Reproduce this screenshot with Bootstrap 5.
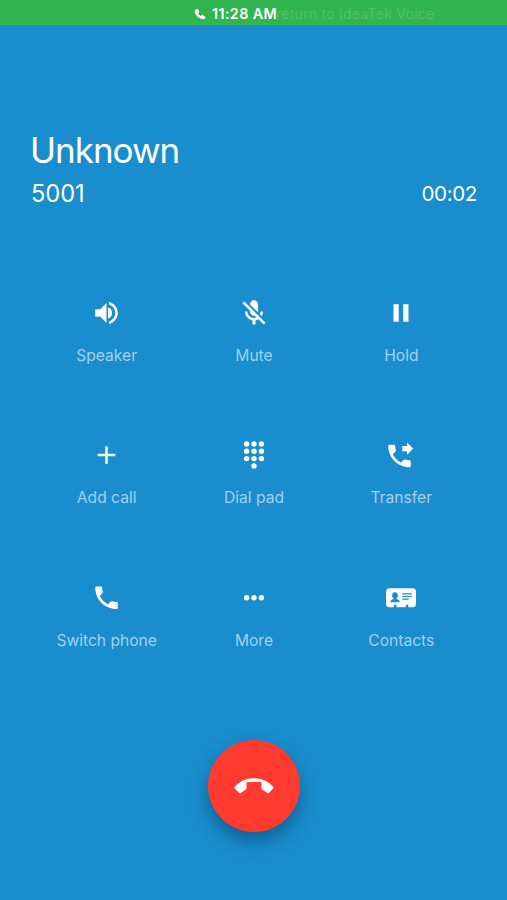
<!DOCTYPE html>
<html lang="en">
<head>
<meta charset="utf-8">
<meta name="viewport" content="width=device-width, initial-scale=1">
<title>Call</title>
<link href="https://cdn.jsdelivr.net/npm/bootstrap@5.3.0/dist/css/bootstrap.min.css" rel="stylesheet">
<style>
body{background:#198dcd;font-family:Inter,"Liberation Sans",sans-serif;height:900px;overflow:hidden}
svg{fill:currentColor;display:block}
.status-bar{height:25px;background:#31b550;line-height:26px;padding:2px 0 0 193px;white-space:nowrap}
.status-time{font-size:14.300px;margin-left:5px;letter-spacing:.4px;font-weight:600;width:66px}
.status-return{color:#50c067;font-size:14px;letter-spacing:.25px;margin-left:-2px}
.caller{padding:103px 30px 0 31px}
.caller-name{font-size:35px;line-height:44px;font-weight:400;letter-spacing:-1px;margin-left:-1px}
.caller-line{height:32px;margin-top:6px;font-weight:400}
.caller-ext{font-size:23.700px;letter-spacing:-.1px}
.caller-time{font-size:20.600px;letter-spacing:-.4px}
.keys{margin:73px 32px 0 33px}
.key{height:142.300px;padding:15px 0 0;color:#fff;background:none;border:0}
.key-label{color:#a3d1eb;font-size:15.600px;line-height:20px;margin-top:18px;letter-spacing:0}
.hang{width:92px;height:92px;background:#ff3b30;margin-top:30px;box-shadow:0 9px 17px rgba(0,35,70,.42);border:0;color:#fff;padding:0}
</style>
<script src="https://cdn.jsdelivr.net/npm/bootstrap@5.3.0/dist/js/bootstrap.bundle.min.js"></script>
</head>
<body class="text-white">
<header class="status-bar d-flex align-items-center">
  <svg width="14" height="14" viewBox="0 0 24 24"><path d="M6.500 3.500C7.500 3 8.300 3.500 9 4.600l1.500 2.700c.6 1.100.3 1.900-.6 2.700l-1.100 1c1 2 2.500 3.500 4.500 4.600l1.200-1c.8-.8 1.700-.9 2.700-.3l3 1.900c1.200.8 1.400 1.900.5 2.900-1.500 1.800-3.700 2.500-6.700 1.200C9 18.200 4.500 13.500 3 8.800 2.300 6.300 4.300 4.500 6.500 3.500z"/></svg>
  <span class="status-time">11:28 AM</span><span class="status-return">return to IdeaTek Voice</span>
</header>
<section class="caller">
  <div class="caller-name">Unknown</div>
  <div class="caller-line d-flex justify-content-between align-items-center">
    <span class="caller-ext">5001</span><span class="caller-time">00:02</span>
  </div>
</section>
<main class="keys row g-0">
  <button class="key col-4 d-flex flex-column align-items-center"><svg width="30" height="30" viewBox="0.4 0 24 24"><path d="M3 9v6h4l5 5V4L7 9H3zm13.500 3A4.500 4.500 0 0 0 13.200 7.600v8.800c2.280-.73 3.300-2.250 3.300-4.400zM14 3.230v2.060c2.890.86 5 3.540 5 6.710s-2.110 5.850-5 6.710v2.060c4.010-.91 7-4.490 7-8.770s-2.990-7.860-7-8.770z"/></svg><span class="key-label">Speaker</span></button>
  <button class="key col-4 d-flex flex-column align-items-center"><svg width="30" height="30" viewBox="0 0 24 24"><path d="M19 11h-1.700c0 .74-.16 1.430-.43 2.050l1.230 1.230c.56-.98.900-2.090.900-3.280zm-4.020.170c0-.06.020-.11.020-.17V5c0-1.660-1.340-3-3-3S9 3.340 9 5v.18l5.980 5.990zM4.270 3L3 4.270l6.010 6.010V11c0 1.660 1.330 3 2.990 3 .22 0 .44-.03.65-.08l1.660 1.660c-.71.33-1.500.52-2.310.52-2.760 0-5.300-2.100-5.300-5.100H5c0 3.410 2.720 6.230 6 6.720V21h2v-3.280c.91-.13 1.770-.45 2.540-.9L19.730 21 21 19.730 4.270 3z" stroke="currentColor" stroke-width=".35"/></svg><span class="key-label">Mute</span></button>
  <button class="key col-4 d-flex flex-column align-items-center"><svg width="30" height="30" viewBox="0 0 24 24"><path d="M6 5h4.200v14H6zM13.800 5H18v14h-4.200z"/></svg><span class="key-label">Hold</span></button>
  <button class="key col-4 d-flex flex-column align-items-center"><svg width="30" height="30" viewBox="0.4 0 24 24"><path d="M19 13h-6v6h-2v-6H5v-2h6V5h2v6h6v2z"/></svg><span class="key-label">Add call</span></button>
  <button class="key col-4 d-flex flex-column align-items-center"><svg width="30" height="30" viewBox="0 0 30 30"><circle cx="7.600" cy="4" r="2.700"/><circle cx="15" cy="4" r="2.700"/><circle cx="22.400" cy="4" r="2.700"/><circle cx="7.600" cy="11.300" r="2.700"/><circle cx="15" cy="11.300" r="2.700"/><circle cx="22.400" cy="11.300" r="2.700"/><circle cx="7.600" cy="18.600" r="2.700"/><circle cx="15" cy="18.600" r="2.700"/><circle cx="22.400" cy="18.600" r="2.700"/><circle cx="15" cy="25.900" r="2.700"/></svg><span class="key-label">Dial pad</span></button>
  <button class="key col-4 d-flex flex-column align-items-center"><svg width="30" height="30" viewBox="1.200 -.7 24 24"><path d="M18 11l5-4.900-5-4.900v2.800h-3.800v4.200H18zM20 15.500c-1.250 0-2.450-.2-3.570-.57a1.020 1.020 0 0 0-1.020.24l-2.200 2.200a15.074 15.074 0 0 1-6.590-6.580l2.200-2.210c.28-.27.360-.66.250-1.010A11.360 11.360 0 0 1 8.500 4c0-.55-.45-1-1-1H4c-.55 0-1 .45-1 1 0 9.390 7.610 17 17 17 .55 0 1-.45 1-1v-3.500c0-.55-.45-1-1-1z"/></svg><span class="key-label">Transfer</span></button>
  <button class="key col-4 d-flex flex-column align-items-center"><svg width="30" height="30" viewBox="0.4 0.3 24 24"><path d="M20 15.500c-1.250 0-2.450-.2-3.570-.57a1.020 1.020 0 0 0-1.020.24l-2.200 2.200a15.074 15.074 0 0 1-6.590-6.580l2.200-2.210c.28-.27.360-.66.250-1.010A11.360 11.360 0 0 1 8.500 4c0-.55-.45-1-1-1H4c-.55 0-1 .45-1 1 0 9.390 7.610 17 17 17 .55 0 1-.45 1-1v-3.500c0-.55-.45-1-1-1z"/></svg><span class="key-label">Switch phone</span></button>
  <button class="key col-4 d-flex flex-column align-items-center"><svg width="30" height="30" viewBox="0 0 30 30"><circle cx="7.600" cy="14.700" r="2.700"/><circle cx="15" cy="14.700" r="2.700"/><circle cx="22.400" cy="14.700" r="2.700"/></svg><span class="key-label">More</span></button>
  <button class="key col-4 d-flex flex-column align-items-center"><svg width="30" height="30" viewBox="0 0 30 30"><path fill-rule="evenodd" d="M3.500 5.300h23a3.500 3.500 0 0 1 3.500 3.500v11.900a3.500 3.500 0 0 1-3.500 3.500h-4.200v-2.500h-2.500v2.500H10.500v-2.500H8v2.500H3.500a3.500 3.500 0 0 1-3.500-3.500V8.800a3.500 3.500 0 0 1 3.500-3.500zM9 9.200a2.900 3.200 0 0 0-1.600 5.900v.8C5.500 16.500 4.300 17.300 4.300 19.300h9.500c0-2-1.200-2.800-3.200-3.400v-.8A2.900 3.200 0 0 0 9 9.200zM16.200 10.200v1.200H26v-1.200zM16.200 12.900v1.200H26v-1.200zM16.200 15.600v1.200h6.500v-1.200z"/></svg><span class="key-label">Contacts</span></button>
</main>
<div class="d-flex justify-content-center">
  <button class="hang rounded-circle d-flex justify-content-center align-items-center" aria-label="End call"><svg width="40" height="40" viewBox="0 0 40 40"><path d="M.6 21C5.500 15 12.300 12.200 20 12.200s14.500 2.800 19.400 8.800c.4.500.4 1-.1 1.500l-4.500 4.400c-.5.500-1 .5-1.600.1l-5-3.400c-.5-.3-.7-.8-.7-1.400v-5.900c-4.800-.9-10.200-.9-15 0v5.900c0 .6-.2 1.100-.7 1.400l-5 3.400c-.6.400-1.100.4-1.600-.1L.7 22.500c-.5-.5-.5-1-.1-1.500z"/></svg></button>
</div>
</body>
</html>
